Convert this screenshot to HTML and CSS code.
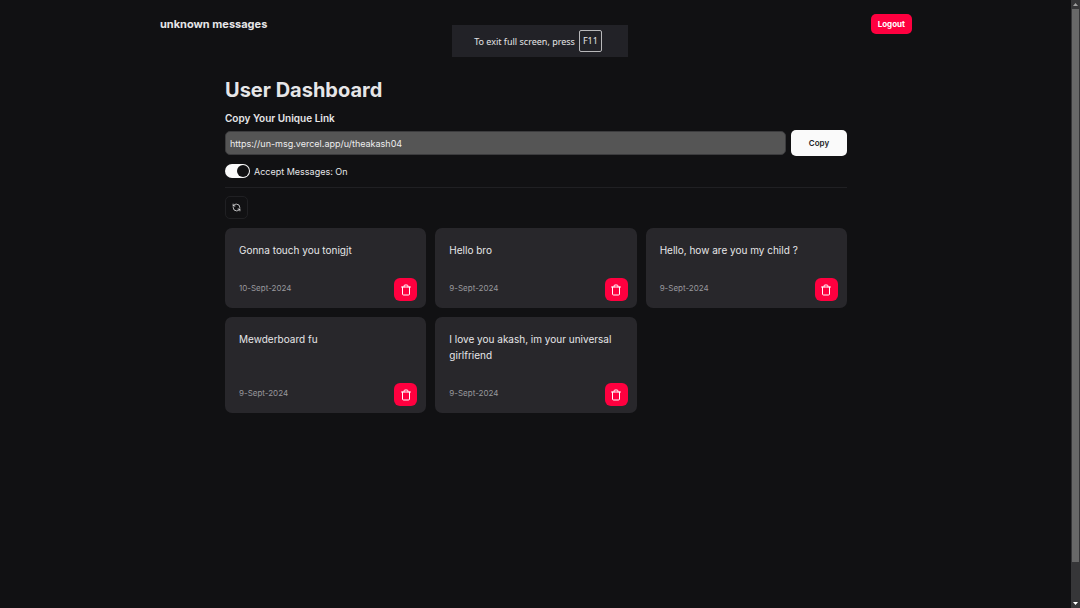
FILE: index.html
```html
<!DOCTYPE html>
<html lang="en">
<head>
<meta charset="utf-8">
<meta name="viewport" content="width=device-width, initial-scale=1">
<title>unknown messages</title>
<link rel="stylesheet" href="styles.css">
</head>
<body>
<svg class="sprite" aria-hidden="true">
  <symbol id="trash" viewBox="0 0 24 24"><path d="M3 6h18M19 6v14a2 2 0 0 1-2 2H7a2 2 0 0 1-2-2V6M8 6V4a2 2 0 0 1 2-2h4a2 2 0 0 1 2 2v2"/></symbol>
  <symbol id="refresh" viewBox="0 0 24 24"><path d="M21 12a9 9 0 0 0-9-9 9.75 9.75 0 0 0-6.74 2.74L3 8M3 3v5h5M3 12a9 9 0 0 0 9 9 9.75 9.75 0 0 0 6.74-2.74L21 16M16 16h5v5"/></symbol>
</svg>
<div class="page">
  <header class="navbar">
    <a class="brand" href="#">unknown messages</a>
    <button class="logout" type="button">Logout</button>
  </header>
  <main class="dashboard">
    <h1 class="title">User Dashboard</h1>
    <label class="link-label" for="link">Copy Your Unique Link</label>
    <div class="link-row">
      <input class="link-input" id="link" type="text" value="https://un-msg.vercel.app/u/theakash04" readonly>
      <button class="copy" type="button">Copy</button>
    </div>
    <div class="accept">
      <input class="switch" id="accept" type="checkbox" role="switch" checked>
      <label for="accept">Accept Messages: On</label>
    </div>
    <hr class="separator">
    <button class="refresh" type="button" aria-label="Refresh messages"><svg class="icon"><use href="#refresh"/></svg></button>
    <section class="messages" aria-label="Messages">
      <article class="card">
        <p class="message">Gonna touch you tonigjt</p>
        <footer class="card-footer"><time class="date">10-Sept-2024</time><button class="delete" type="button" aria-label="Delete message"><svg class="icon"><use href="#trash"/></svg></button></footer>
      </article>
      <article class="card">
        <p class="message">Hello bro</p>
        <footer class="card-footer"><time class="date">9-Sept-2024</time><button class="delete" type="button" aria-label="Delete message"><svg class="icon"><use href="#trash"/></svg></button></footer>
      </article>
      <article class="card">
        <p class="message">Hello, how are you my child ?</p>
        <footer class="card-footer"><time class="date">9-Sept-2024</time><button class="delete" type="button" aria-label="Delete message"><svg class="icon"><use href="#trash"/></svg></button></footer>
      </article>
      <article class="card">
        <p class="message">Mewderboard fu</p>
        <footer class="card-footer"><time class="date">9-Sept-2024</time><button class="delete" type="button" aria-label="Delete message"><svg class="icon"><use href="#trash"/></svg></button></footer>
      </article>
      <article class="card">
        <p class="message">I love you akash, im your universal girlfriend</p>
        <footer class="card-footer"><time class="date">9-Sept-2024</time><button class="delete" type="button" aria-label="Delete message"><svg class="icon"><use href="#trash"/></svg></button></footer>
      </article>
    </section>
  </main>
</div>
<div class="toast" role="status">To exit full screen, press <kbd class="key">F11</kbd></div>
<div class="scrollbar" aria-hidden="true">
  <span class="arrow arrow-up"></span>
  <span class="thumb"></span>
  <span class="track"></span>
  <span class="arrow arrow-down"></span>
</div>
</body>
</html>
```
FILE: styles.css
```css
* {
  box-sizing: border-box;
}

body {
  margin: 0;
  background: #111113;
  color: #e6e6e8;
  font-family: Inter, "Liberation Sans", sans-serif;
  font-size: 9px;
}

button,
input {
  font: inherit;
}

button {
  display: inline-flex;
  align-items: center;
  justify-content: center;
  padding: 0;
  border: 0;
  cursor: pointer;
}

.sprite {
  position: absolute;
  width: 0;
  height: 0;
}

.icon {
  width: 12px;
  height: 12px;
  fill: none;
  stroke: currentColor;
  stroke-width: 2;
  stroke-linecap: round;
  stroke-linejoin: round;
}

.page {
  min-height: 100vh;
  padding-right: 8px;
}

.navbar {
  display: flex;
  align-items: center;
  justify-content: space-between;
  max-width: 752px;
  height: 48px;
  margin: 0 auto;
}

.brand {
  color: inherit;
  font-size: 11px;
  font-weight: 700;
  text-decoration: none;
}

.logout {
  height: 20px;
  padding: 0 7px;
  border-radius: 5px;
  background: #ff003f;
  color: #fff;
  font-size: 8px;
  font-weight: 700;
}

.dashboard {
  max-width: 622px;
  margin: 0 auto;
  padding-top: 28px;
}

.title {
  margin: 0 0 8px;
  font-size: 20px;
  font-weight: 700;
  line-height: 28px;
}

.link-label {
  display: block;
  margin-bottom: 6px;
  font-size: 10px;
  font-weight: 600;
  line-height: 12px;
}

.link-row {
  display: flex;
  align-items: center;
  gap: 5px;
}

.link-input {
  flex: 1;
  min-width: 0;
  height: 24px;
  padding: 0 4px;
  border: 1px solid #3c3c3e;
  border-radius: 5px;
  background: #555;
  color: #eee;
}

.copy {
  width: 56px;
  height: 26px;
  border-radius: 5px;
  background: #fafafa;
  color: #222225;
  font-size: 8px;
  font-weight: 600;
}

.accept {
  display: flex;
  align-items: center;
  gap: 4px;
  height: 14px;
  margin-top: 8px;
}

.switch {
  appearance: none;
  display: flex;
  justify-content: flex-end;
  width: 25px;
  height: 14px;
  margin: 0;
  padding: 1px;
  border-radius: 7px;
  background: #fafafa;
}

.switch::before {
  content: "";
  width: 12px;
  height: 12px;
  border-radius: 50%;
  background: #111113;
}

.separator {
  height: 1px;
  margin: 9px 0 8px;
  border: 0;
  background: #202023;
}

.refresh {
  display: flex;
  width: 23px;
  height: 23px;
  margin-bottom: 9px;
  border: 1px solid #202023;
  border-radius: 5px;
  background: transparent;
  color: #f4f4f5;
}

.refresh .icon {
  width: 9px;
  height: 9px;
}

.messages {
  display: grid;
  grid-template-columns: repeat(3, 1fr);
  gap: 9px;
}

.card {
  display: flex;
  flex-direction: column;
  justify-content: space-between;
  gap: 20px;
  padding: 14px 9px 7px 14px;
  border-radius: 7px;
  background: #28272b;
}

.message {
  margin: 0;
  font-size: 10px;
  line-height: 16px;
}

.card-footer {
  display: flex;
  align-items: center;
  justify-content: space-between;
}

.date {
  padding-bottom: 3px;
  color: #98989d;
  font-size: 8px;
}

.delete {
  width: 23px;
  height: 23px;
  border-radius: 6px;
  background: #ff003f;
  color: #fff;
}

.toast {
  position: fixed;
  top: 25px;
  left: 50%;
  display: flex;
  align-items: center;
  justify-content: center;
  gap: 4px;
  width: 176px;
  height: 32px;
  padding-right: 4px;
  background: #222227;
  color: #e4e4e6;
  font-family: "Noto Sans", sans-serif;
  font-size: 9px;
  transform: translateX(-50%);
}

.key {
  padding: 0 3px;
  border: 1px solid #b8b8ba;
  border-radius: 2px;
  font: inherit;
  line-height: 20px;
}

.scrollbar {
  position: fixed;
  top: 0;
  right: 0;
  bottom: 0;
  display: flex;
  flex-direction: column;
  width: 9px;
  padding: 0 1px;
  background: #363638;
}

.arrow {
  height: 9px;
  padding: 3px 1px;
}

.arrow::before {
  content: "";
  display: block;
  height: 3px;
  background: #a0a0a0;
  clip-path: polygon(50% 0, 100% 100%, 0 100%);
}

.arrow-down::before {
  background: #fff;
  clip-path: polygon(0 0, 100% 0, 50% 100%);
}

.thumb {
  flex: 553;
  background: #686868;
}

.track {
  flex: 37;
}
```
